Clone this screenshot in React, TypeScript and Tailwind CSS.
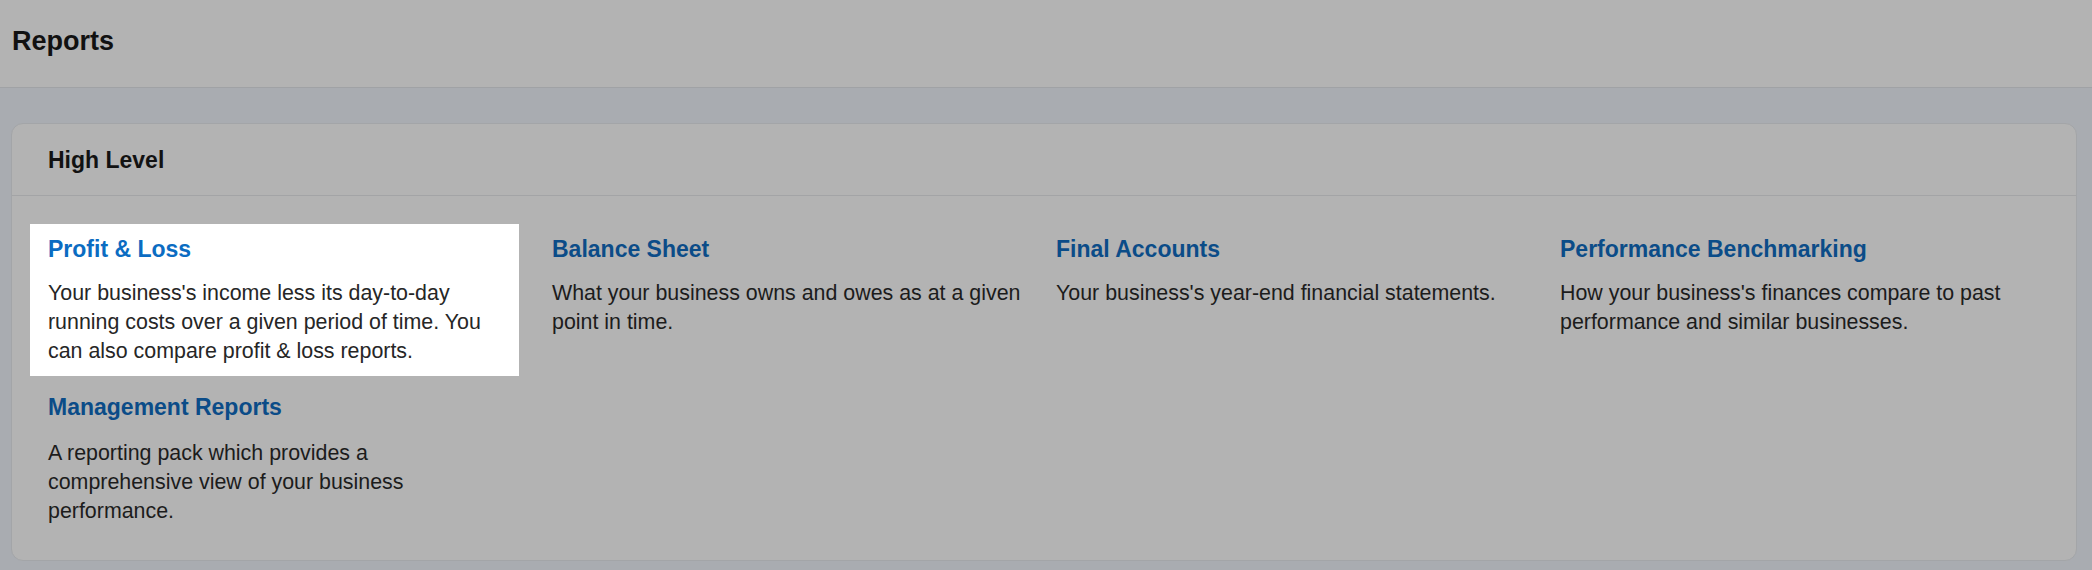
import React from 'react';

// Report tiles in the "High Level" group
const reports = [
  {
    id: 'pnl',
    title: 'Profit & Loss',
    description:
      "Your business's income less its day-to-day running costs over a given period of time. You can also compare profit & loss reports.",
    highlighted: true,
  },
  {
    id: 'balance',
    title: 'Balance Sheet',
    description: 'What your business owns and owes as at a given point in time.',
  },
  {
    id: 'final',
    title: 'Final Accounts',
    description: "Your business's year-end financial statements.",
  },
  {
    id: 'benchmark',
    title: 'Performance Benchmarking',
    description: "How your business's finances compare to past performance and similar businesses.",
  },
  {
    id: 'management',
    title: 'Management Reports',
    description: 'A reporting pack which provides a comprehensive view of your business performance.',
    narrow: true,
  },
];

type Report = {
  id: string;
  title: string;
  description: string;
  highlighted?: boolean;
  narrow?: boolean;
};

const ReportTile: React.FC<{ report: Report }> = ({ report }) => {
  const lit = report.highlighted;
  return (
    <div className={`pt-[10px] pb-[10px] pl-[18px] ${lit ? 'bg-white' : ''}`}>
      <a
        href="#"
        className={`block text-[23px] leading-[30px] font-bold ${lit ? 'text-[#0b6cc2]' : 'text-[#0b4c88]'}`}
      >
        {report.title}
      </a>
      <p
        className={`mt-[15px] text-[21.4px] leading-[29px] ${lit ? 'text-[#262626]' : 'text-[#1c1c1c]'} ${report.narrow ? 'max-w-[440px] mt-[17px]' : ''}`}
      >
        {report.description}
      </p>
    </div>
  );
};

const App: React.FC = () => {
  return (
    <div className="min-h-screen bg-[#a9acb1] font-['Liberation_Sans',Arial,sans-serif]">
      {/* Page header */}
      <header className="h-[88px] bg-[#b3b3b3] border-b border-[#a0a2a5] pl-[12px] pt-[26px]">
        <h1 className="text-[27px] leading-[30px] font-bold text-[#111111]">Reports</h1>
      </header>

      {/* High level card */}
      <section className="mt-[35px] ml-[11px] mr-[15px] rounded-[12px] border border-[#a3a5a8] bg-[#b3b3b3]">
        <div className="h-[72px] border-b border-[#a3a4a6] pl-[36px] pt-[22px]">
          <h2 className="text-[23px] leading-[28px] font-bold text-[#121212]">High Level</h2>
        </div>
        <div className="pl-[18px] pt-[28px] pb-[24px]">
          <div className="grid grid-cols-[repeat(4,489px)] gap-x-[15px] gap-y-[6px] items-start">
            {reports.map((report) => (
              <ReportTile key={report.id} report={report} />
            ))}
          </div>
        </div>
      </section>
    </div>
  );
};

export default App;
